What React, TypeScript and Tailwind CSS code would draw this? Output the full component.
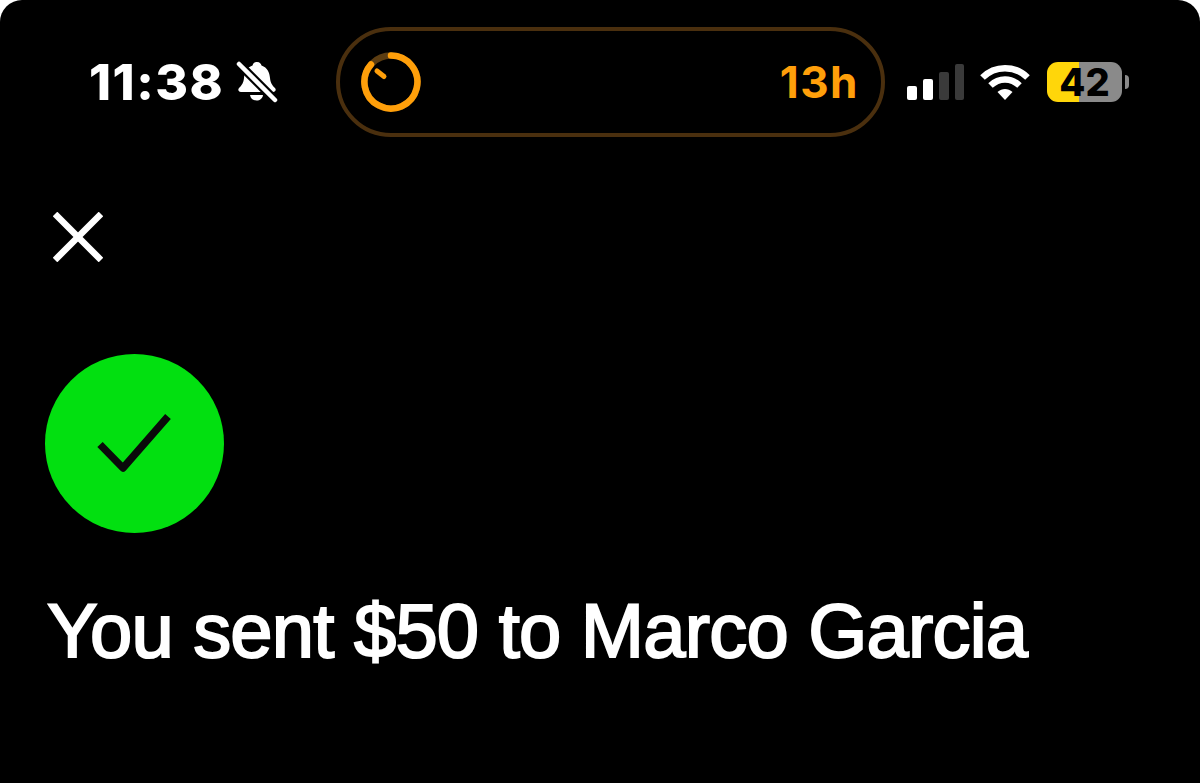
import React from "react";

function MutedBell() {
  return (
    <svg width="42" height="42" viewBox="0 0 42 42" className="shrink-0">
      <path
        d="M21 1c3 0 4 2 4.500 3.500 6 2 8 7 8.500 12.500.5 5 2 7 5 10 1.500 2 .5 4-2 4H5c-2.500 0-3.500-2-2-4 3-3 4.500-5 5-10C8.500 11.500 10.500 6.500 16.500 4.500 17 3 18 1 21 1z"
        fill="#ffffff"
      />
      <path d="M14 34h13c-.5 3.500-3 5.500-6.500 5.500S14.500 37.500 14 34z" fill="#ffffff" />
      <path d="M2 2l38 38" stroke="#000000" strokeWidth="9" />
      <path d="M3 3l36 36" stroke="#ffffff" strokeWidth="4.500" strokeLinecap="round" />
    </svg>
  );
}

function TimerRing() {
  return (
    <svg width="60" height="60" viewBox="0 0 60 60" className="shrink-0">
      <circle cx="30" cy="30" r="26.500" fill="none" stroke="#5c3d12" strokeWidth="6.500" />
      <path
        d="M30 3.500A26.500 26.500 0 1 1 10 12.500"
        fill="none"
        stroke="#ff9f0a"
        strokeWidth="6.500"
        strokeLinecap="round"
      />
      <path d="M16 19l7 5.500" stroke="#ff9f0a" strokeWidth="5" strokeLinecap="round" />
    </svg>
  );
}

function SignalBars() {
  return (
    <div className="flex h-[36px] items-end gap-[6px]">
      <div className="h-[14px] w-[10px] rounded-[2px] bg-white" />
      <div className="h-[21px] w-[10px] rounded-[2px] bg-white" />
      <div className="h-[28px] w-[10px] rounded-[2px] bg-[#3a3a3a]" />
      <div className="h-[36px] w-[9px] rounded-[2px] bg-[#3a3a3a]" />
    </div>
  );
}

function WifiGlyph() {
  return (
    <svg width="50" height="36" viewBox="0 0 50 36" className="shrink-0">
      <g fill="none" stroke="#ffffff" strokeWidth="6.500">
        <path d="M2.500 13.500C15 1 35 1 47.500 13.500" />
        <path d="M10.500 21.500C19 13.500 31 13.500 39.500 21.500" />
      </g>
      <path d="M17.500 28c4.500-4 10.500-4 15 0L25 36z" fill="#ffffff" />
    </svg>
  );
}

function Battery() {
  return (
    <div className="flex items-center gap-[3px]">
      <div className="relative flex h-[40px] w-[75px]">
        <div className="w-[32px] rounded-l-[11px] bg-[#ffd60a]" />
        <div className="flex-1 rounded-r-[11px] bg-[#8a8a8a]" />
        <span className="absolute inset-0 flex items-center justify-center text-[38px] font-extrabold leading-none text-black">
          42
        </span>
      </div>
      <div className="h-[14px] w-[4px] rounded-r-[4px] bg-[#8a8a8a]" />
    </div>
  );
}

export default function App() {
  return (
    <div className="h-[783px] w-[1200px] overflow-hidden bg-white font-['Inter',sans-serif]">
      <div className="h-full rounded-t-[22px] bg-black pt-[27px]">
        <header className="flex h-[110px] items-center pl-[89px]">
          <span className="w-[147px] text-[50px] font-extrabold leading-none tracking-[1.5px] text-white">11:38</span>
          <MutedBell />
          <div className="ml-[58px] flex h-[110px] w-[549px] items-center justify-between rounded-[55px] border-[4px] border-[#4a2f0e] pl-[21px] pr-[22px]">
            <TimerRing />
            <span className="text-[44px] font-bold leading-none tracking-[1.5px] text-[#ff9f0a]">13h</span>
          </div>
          <div className="ml-[22px] flex items-center gap-[16px]">
            <SignalBars />
            <WifiGlyph />
            <div className="ml-[1px]">
              <Battery />
            </div>
          </div>
        </header>
        <main className="pl-[45px] pt-[75px]">
          <svg width="50" height="50" viewBox="0 0 50 50" className="ml-[8px] block">
            <path d="M2 2l46 46M48 2L2 48" stroke="#ffffff" strokeWidth="6.500" />
          </svg>
          <div className="mt-[92px] flex h-[179px] w-[179px] items-center justify-center rounded-full bg-[#02e010]">
            <svg width="80" height="64" viewBox="0 0 80 64">
              <path d="M5 32.500L28 56 73 4.500" fill="none" stroke="#0a0a0a" strokeWidth="7.500" strokeLinejoin="round" />
            </svg>
          </div>
          <h1 className="ml-[2px] mt-[52px] font-['Liberation_Sans',sans-serif] text-[76px] leading-[92px] tracking-[-0.8px] text-white [-webkit-text-stroke:2px_white]">
            You sent $50 to Marco Garcia
          </h1>
        </main>
      </div>
    </div>
  );
}
